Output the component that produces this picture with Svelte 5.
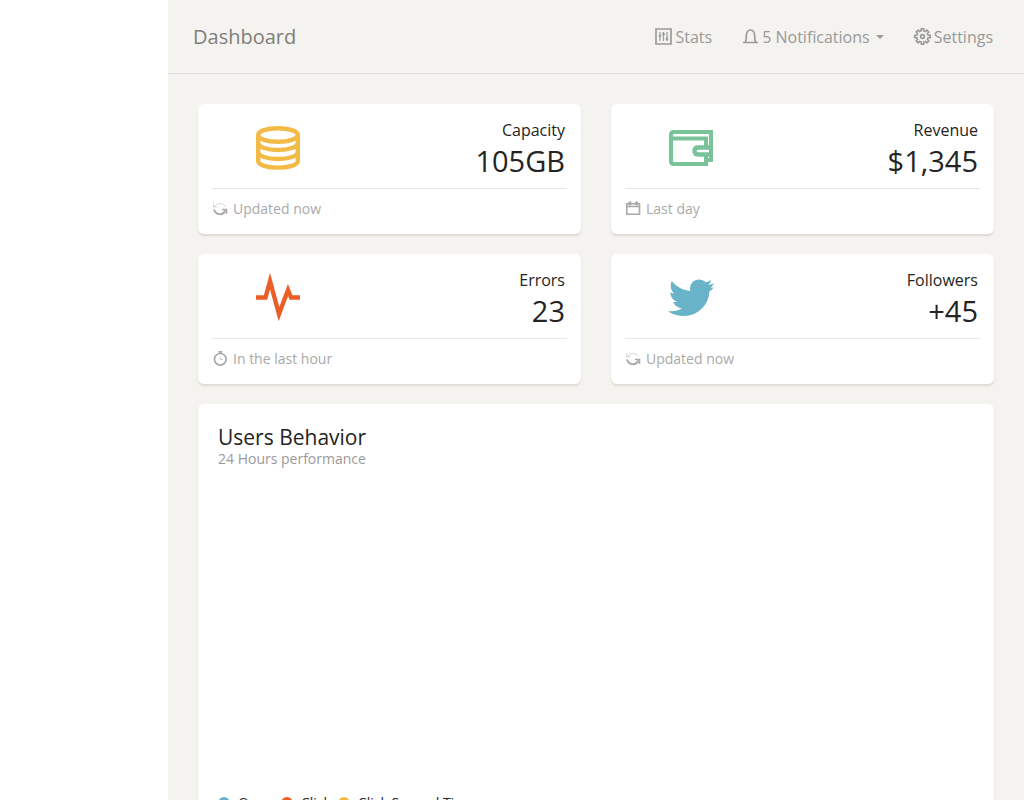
<script>
	const stats = [
		{ label: 'Capacity', value: '105GB', icon: 'server', color: '#f3bb45', footer: 'Updated now', footerIcon: 'reload' },
		{ label: 'Revenue', value: '$1,345', icon: 'wallet', color: '#7ac29a', footer: 'Last day', footerIcon: 'calendar' },
		{ label: 'Errors', value: '23', icon: 'pulse', color: '#eb5e28', footer: 'In the last hour', footerIcon: 'timer' },
		{ label: 'Followers', value: '+45', icon: 'twitter', color: '#68b3c8', footer: 'Updated now', footerIcon: 'reload' }
	];

	const legend = [
		{ label: 'Open', color: '#68b3c8' },
		{ label: 'Click', color: '#eb5e28' },
		{ label: 'Click Second Time', color: '#f3bb45' }
	];
</script>

{#snippet statIcon(name)}
	<svg class="stat-icon" viewBox="0 0 44 44" fill="none" stroke="currentColor" stroke-width="4.4" aria-hidden="true">
		{#if name === 'server'}
			<ellipse cx="22" cy="9" rx="19.8" ry="6.8" />
			<path d="M2.200 9v26c0 4 9 6.600 19.800 6.600s19.800-2.600 19.800-6.600V9" />
			<path d="M2.200 17c0 4 9 7 19.800 7s19.800-3 19.800-7M2.200 26c0 4 9 7 19.800 7s19.800-3 19.800-7" />
		{:else if name === 'wallet'}
			<path d="M37 38H5q-3 0-3-3V9q0-3 3-3h37v28h-5zM2 12.500h35V21M37 29v9" stroke-width="4" />
			<path d="M42 21.500H29q-3.500 0-3.500 3.500t3.500 3.500h13" />
		{:else if name === 'pulse'}
			<path d="M0 21.500h9.500L14 5l9 33 9-24 3 7.500h9" stroke-miterlimit="8" />
		{:else}
			<path
				stroke="none"
				fill="currentColor"
				d="M45 7.500l-3.300 4.400 3-.6c-.9 1.700-2.500 3-4.300 4C40 28 30 40 14.500 40 9 40 4 38.500-1 35.200c5.500.5 10-.4 14-3-4-.2-7.200-2.700-9-6.200 1.800.2 3 .1 3.900-.4C4 24.500 1.500 21 1.300 16.600c1.200.7 2.500 1 4 1.100C1.700 14.700.7 9.600 2.700 5c4.800 5.800 11 9.500 18.600 9.900C20 8.400 24.300 3.500 30 3.500c2.500 0 4.900 1 6.600 2.800 2-.4 3.900-1.100 5.600-2.300-.5 2-1.500 3.500-3 4.900z"
			/>
		{/if}
	</svg>
{/snippet}

{#snippet footerIcon(name)}
	<svg class="footer-icon" viewBox="0 0 16 16" fill="none" stroke="currentColor" aria-hidden="true">
		{#if name === 'reload'}
			<path d="M1.500 2v4h4M2.500 6c2-4.500 9-4.500 11 0" stroke-width="0.8" opacity="0.6" />
			<path d="M2 8.500c2 6 9 6 11.500 1" stroke-width="2" />
			<path d="M10 8.500h4.500v4.500" stroke-width="1.5" />
		{:else if name === 'calendar'}
			<path d="M1.800 2.800h12.700v10.500H1.800zM2 5.500h12.500" stroke-width="1.6" />
			<path d="M4 1h2v3H4zM10.500 1h2v3h-2z" fill="currentColor" />
		{:else}
			<circle cx="8.300" cy="8.300" r="5.800" stroke-width="1.7" />
			<path d="M6.500.8h3.600M8.300.8v2" stroke-width="1.7" />
			<path d="M8.300 5.500v3h2.500" stroke-width="0.6" />
		{/if}
	</svg>
{/snippet}

<div class="wrapper">
	<aside class="sidebar"></aside>

	<div class="main-panel">
		<header class="navbar">
			<a class="brand" href="#dashboard">Dashboard</a>
			<nav>
				<a class="nav-item" href="#stats">
					<svg class="nav-icon" viewBox="0 0 17 17" fill="none" stroke="currentColor" aria-hidden="true">
						<path d="M1 1h15v15H1z" stroke-width="1.7" />
						<path d="M5 4v9M8.500 4v9M12 4v9" stroke-width="1.2" />
						<circle cx="5" cy="8" r="1" />
						<circle cx="8.500" cy="6" r="1" />
						<circle cx="12" cy="11" r="1" />
					</svg>
					Stats
				</a>
				<button class="nav-item" type="button" aria-haspopup="true">
					<svg class="nav-icon" viewBox="0 0 17 17" fill="none" stroke="currentColor" stroke-width="1.7" aria-hidden="true">
						<path d="M1 14.500h15M3 14.500c1.300-1.500 1.300-3 1.300-6.500 0-3.700 1.500-6 4.200-6s4.200 2.300 4.200 6c0 3.500 0 5 1.300 6.500" />
					</svg>
					5 Notifications
					<span class="caret"></span>
				</button>
				<a class="nav-item" href="#settings">
					<svg class="nav-icon" viewBox="0 0 17 17" fill="none" stroke="currentColor" stroke-width="1.6" aria-hidden="true">
						<path
							d="M7.300.8h2.400v2l1.700.7 1.500-1.400 1.900 1.900-1.400 1.500.7 1.700h2.100v2.500h-2.100l-.7 1.700 1.400 1.500-1.900 1.900-1.500-1.400-1.700.7v2.100H7.300v-2.100l-1.700-.7-1.500 1.400-1.900-1.900 1.400-1.500-.7-1.700H.8V7.200h2.100l.7-1.700L2.200 4l1.900-1.900 1.500 1.400 1.700-.7z"
						/>
						<circle cx="8.500" cy="8.500" r="1.900" />
					</svg>
					Settings
				</a>
			</nav>
		</header>

		<main class="content">
			<div class="stats">
				{#each stats as stat (stat.label)}
					<section class="card">
						<div class="stat-body">
							<div class="icon-big" style="color: {stat.color}">{@render statIcon(stat.icon)}</div>
							<div class="numbers">
								<p>{stat.label}</p>
								<strong>{stat.value}</strong>
							</div>
						</div>
						<div class="stat-footer">
							{@render footerIcon(stat.footerIcon)}
							{stat.footer}
						</div>
					</section>
				{/each}
			</div>

			<section class="card chart-card">
				<h4>Users Behavior</h4>
				<p class="category">24 Hours performance</p>
				<div class="chart"></div>
				<ul class="legend">
					{#each legend as item (item.label)}
						<li><span class="dot" style="background: {item.color}"></span>{item.label}</li>
					{/each}
				</ul>
			</section>
		</main>
	</div>
</div>

<style>
	:global(body) {
		margin: 0;
		background: #fff;
	}

	.wrapper {
		display: flex;
		height: 100vh;
		font-family: 'Open Sans', sans-serif;
		font-size: 16px;
		color: #252422;
	}

	.sidebar {
		flex: 0 0 168px;
		background: #fff;
	}

	.main-panel {
		flex: 1;
		min-width: 0;
		overflow-y: auto;
		scrollbar-width: none;
		background: #f4f3ef;
	}

	.navbar {
		display: flex;
		align-items: center;
		justify-content: space-between;
		height: 73px;
		padding: 0 31px 0 25px;
		border-bottom: 1px solid #dddddd;
	}

	.brand {
		font-size: 20px;
		color: #807e7a;
		text-decoration: none;
	}

	nav {
		display: flex;
		gap: 30px;
	}

	.nav-item {
		display: flex;
		align-items: center;
		gap: 3px;
		padding: 0;
		border: 0;
		background: none;
		font: inherit;
		line-height: 24px;
		color: #9a9a9a;
		text-decoration: none;
	}

	.nav-icon {
		width: 17px;
		height: 17px;
	}

	.caret {
		margin-left: 3px;
		border-top: 4px solid;
		border-left: 4px solid transparent;
		border-right: 4px solid transparent;
	}

	.content {
		padding: 30px;
	}

	.stats {
		display: grid;
		grid-template-columns: 1fr 1fr;
		gap: 20px 30px;
		margin-bottom: 20px;
	}

	.card {
		border-radius: 6px;
		background: #fff;
		box-shadow: 0 2px 2px rgba(204, 197, 185, 0.5);
	}

	.stat-body {
		display: flex;
		padding-top: 14px;
	}

	.icon-big {
		display: flex;
		flex: 0 0 42%;
		align-items: center;
		justify-content: center;
		padding-bottom: 2px;
		box-sizing: border-box;
	}

	.stat-icon {
		width: 44px;
		height: 44px;
		overflow: visible;
	}

	.numbers {
		flex: 1;
		padding-right: 16px;
		text-align: right;
	}

	.numbers p {
		margin: 0;
		line-height: 24px;
	}

	.numbers strong {
		display: block;
		font-size: 29px;
		font-weight: 400;
		line-height: 38px;
	}

	.stat-footer {
		display: flex;
		align-items: center;
		gap: 5px;
		margin: 8px 14px 0;
		padding: 8px 0 13px;
		border-top: 1px solid #e8e7e3;
		font-size: 14px;
		line-height: 24px;
		color: #a9a9a9;
	}

	.footer-icon {
		width: 16px;
		height: 16px;
	}

	.chart-card {
		padding: 20px;
	}

	h4 {
		margin: 0;
		font-size: 21px;
		font-weight: 400;
		line-height: 27px;
	}

	.category {
		margin: 0;
		font-size: 14px;
		line-height: 16px;
		color: #9a9a9a;
	}

	.chart {
		height: 324px;
	}

	.legend {
		display: flex;
		gap: 7px;
		margin: 0;
		padding: 0;
		list-style: none;
		font-size: 14px;
		line-height: 24px;
	}

	.legend li {
		display: flex;
		align-items: center;
		gap: 8px;
	}

	.dot {
		width: 12px;
		height: 12px;
		border-radius: 50%;
	}
</style>
